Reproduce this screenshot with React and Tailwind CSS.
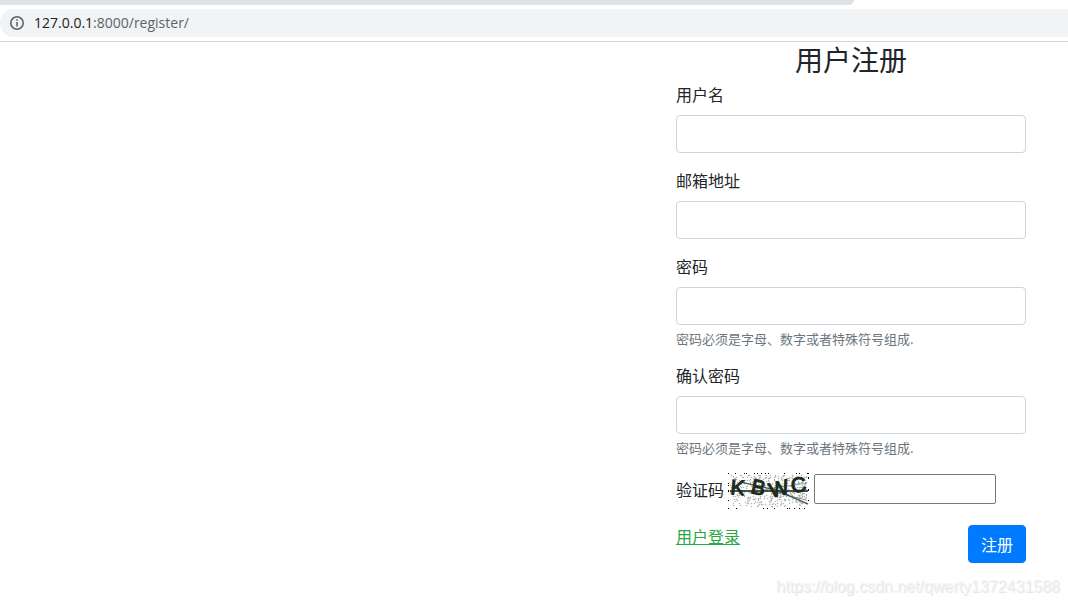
import React from 'react';

const FIELDS = [
  { id: 'username', label: '用户名', type: 'text' },
  { id: 'email', label: '邮箱地址', type: 'email' },
  { id: 'password', label: '密码', type: 'password', help: '密码必须是字母、数字或者特殊符号组成.' },
  { id: 'confirm', label: '确认密码', type: 'password', help: '密码必须是字母、数字或者特殊符号组成.' },
];

// Fixed seed, so the captcha noise is the same on every render
const makeNoise = () => {
  let seed = 71;
  const next = () => {
    seed = (seed * 16807) % 2147483647;
    return seed / 2147483647;
  };
  let inner = '';
  let edge = '';
  for (let i = 0; i < 400; i++) {
    inner += `M${2 + Math.floor(next() * 77)} ${2 + Math.floor(next() * 32)}h1v1h-1z`;
  }
  for (let x = 0; x < 81; x++) {
    if (next() < 0.16) edge += `M${x} 0h1v1h-1z`;
    if (next() < 0.16) edge += `M${x} 35h1v1h-1z`;
  }
  for (let y = 0; y < 36; y++) {
    if (next() < 0.2) edge += `M0 ${y}h1v1h-1z`;
    if (next() < 0.2) edge += `M80 ${y}h1v1h-1z`;
  }
  return { inner, edge };
};

const noise = makeNoise();

const Captcha = () => (
  <svg width="81" height="36" viewBox="0 0 81 36" role="img" aria-label="KBWC" className="shrink-0">
    <path d={noise.inner} fill="#4f5f50" stroke="#4f5f50" strokeWidth="0.3" opacity="0.45" />
    <path d={noise.edge} fill="#000" shapeRendering="crispEdges" />
    <g fill="none" stroke="#26382b">
      <path d="M2 18H80" strokeWidth="1.8" opacity="0.85" />
      <path d="M12 9L48 17L80 31" strokeWidth="1.4" opacity="0.75" />
      <path d="M22 20L46 15L79 10" strokeWidth="1" opacity="0.5" />
      <path d="M50 20L78 27" strokeWidth="1" opacity="0.5" />
    </g>
    <g
      fill="#1b2b20"
      stroke="#1b2b20"
      strokeWidth="1.1"
      fontSize="21"
      fontFamily='"Liberation Sans", sans-serif'
    >
      <text x="2" y="21" rotate="5">K</text>
      <text x="22" y="20" rotate="12">B</text>
      <text x="43" y="25" rotate="-14">W</text>
      <text x="64" y="20" rotate="-8">C</text>
    </g>
  </svg>
);

const AddressBar = () => (
  <header className="border-b border-[#d5d7da] pb-1">
    <div className="h-[5px] w-4/5 rounded-br-lg bg-[#dee1e6]" />
    <div className="mt-1 flex h-7 items-center gap-2 rounded-l-full bg-[#f1f3f4] pl-2">
      <svg width="18" height="18" viewBox="0 0 18 18" fill="none" aria-hidden="true">
        <circle cx="9" cy="9" r="6.2" stroke="#5f6368" strokeWidth="1.6" />
        <path d="M9 8v4.5M9 5.2v1.6" stroke="#5f6368" strokeWidth="1.6" />
      </svg>
      <p className="font-['Open_Sans','Noto_Sans',sans-serif] text-sm text-[#5f6368]">
        <span className="text-[#202124]">127.0.0.1</span>:8000/register/
      </p>
    </div>
  </header>
);

const Field = ({ id, label, type, help }) => (
  <div className="mb-4">
    <label htmlFor={id} className="mb-[10px] block leading-[22px]">
      {label}
    </label>
    <input
      id={id}
      type={type}
      className="block h-[38px] w-full rounded border border-[#ced4da] bg-white px-3 focus:outline-none focus:ring-2 focus:ring-blue-300"
    />
    {help && <small className="mt-1 block text-[13px] leading-[19px] text-[#6c757d]">{help}</small>}
  </div>
);

const App = () => (
  <div className="bg-white font-['Noto_Sans_CJK_SC',sans-serif] text-base text-[#212529]">
    <AddressBar />
    <main className="flex justify-end pr-[42px]">
      <form className="w-full max-w-[350px]" onSubmit={(e) => e.preventDefault()}>
        <h3 className="mb-[6px] text-center text-[28px] leading-[35px]">用户注册</h3>
        {FIELDS.map((field) => (
          <Field key={field.id} {...field} />
        ))}
        <div className="mb-4 flex items-center gap-1">
          <label htmlFor="captcha" className="pb-1">
            验证码
          </label>
          <Captcha />
          <input
            id="captcha"
            type="text"
            className="mt-px ml-px h-[30px] w-[182px] self-start rounded-xs border border-[#767676] px-1"
          />
        </div>
        <div className="flex items-start justify-between">
          <a href="#login" className="leading-[22px] text-[#28a745] underline">
            用户登录
          </a>
          <button
            type="submit"
            className="rounded border border-[#007bff] bg-[#007bff] px-3 py-[6px] leading-6 text-white"
          >
            注册
          </button>
        </div>
      </form>
    </main>
    <footer className="mt-3 pr-2 text-right font-['Liberation_Sans',sans-serif] text-base text-[#f2f2f2] [text-shadow:1px_1px_1px_#e2e2e2]">
      https://blog.csdn.net/qwerty1372431588
    </footer>
  </div>
);

export default App;
